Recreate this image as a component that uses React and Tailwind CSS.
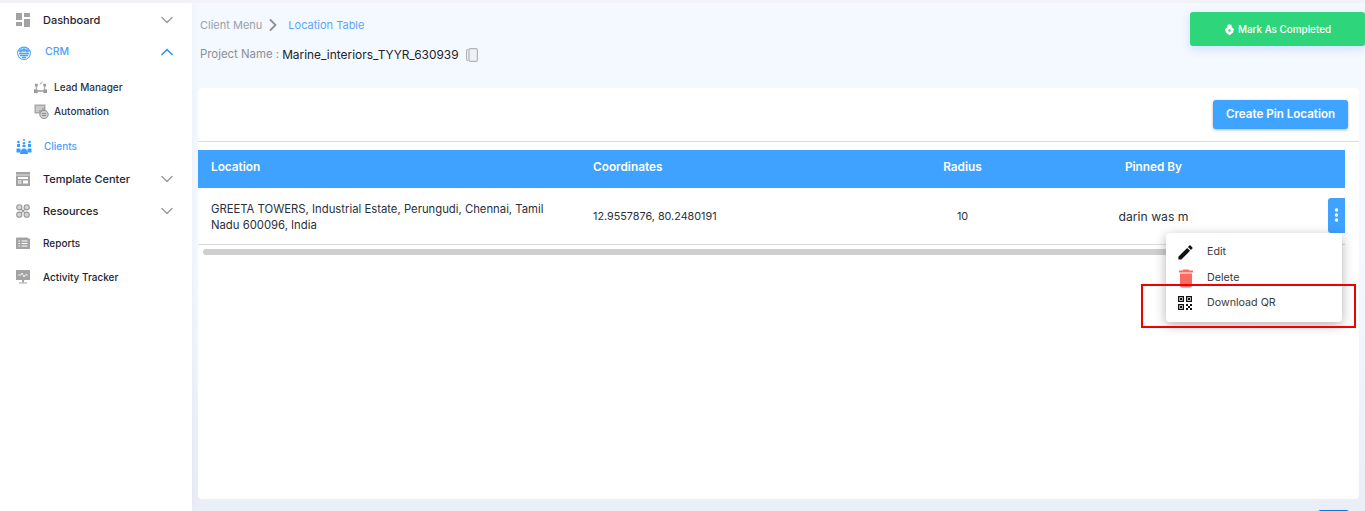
import React from "react";
import { ChevronDown, ChevronUp, ChevronRight, EllipsisVertical } from "lucide-react";

const F = { fontFamily: "Inter, 'Open Sans', sans-serif" };

function DashIcon() {
  return (
    <svg width="14" height="14" viewBox="0 0 14 14" fill="#a3a3a3">
      <rect x="0" y="0" width="6" height="7" /><rect x="8" y="0" width="6" height="4" />
      <rect x="0" y="9" width="6" height="4" /><rect x="8" y="6" width="6" height="8" />
    </svg>
  );
}
function CrmIcon() {
  return (
    <svg width="16" height="16" viewBox="0 0 16 16" fill="none" stroke="#4aa3fb" strokeWidth="1.1">
      <path d="M1.500 9.500a6.500 6.500 0 0 1 13 0" /><path d="M3.500 8a4.500 4.500 0 0 1 9 0" strokeWidth=".7" />
      <circle cx="5" cy="6.800" r="1.100" fill="#4aa3fb" /><circle cx="11" cy="6.800" r="1.100" fill="#4aa3fb" /><circle cx="8" cy="6" r="1.300" fill="#4aa3fb" />
      <path d="M1.500 9.500c.8 3.500 3.400 6 6.500 6s5.700-2.500 6.500-6" /><path d="M3 9.500h10M4 11.500h8M6 13.500h4" strokeWidth="1.300" />
    </svg>
  );
}
function LeadIcon() {
  return (
    <svg width="13" height="13" viewBox="0 0 14 14" fill="#9a9a9a">
      <rect x="1" y="3" width="3" height="3" /><rect x="0" y="9" width="4" height="4" /><rect x="10" y="9" width="4" height="4" /><rect x="10" y="3" width="3" height="3" />
      <path d="M2 6h1v3H2zM11 6h1v3h-1zM4 10h6v1.500H4zM6 3.500l3-3 .6.6-3 3z" />
    </svg>
  );
}
function AutoIcon() {
  return (
    <svg width="15" height="15" viewBox="0 0 15 15" fill="none">
      <rect x="0.500" y="0.500" width="11" height="9" fill="#a8a8a8" /><path d="M2 3h8M2 5h6M2 7h3" stroke="#fff" strokeWidth=".8" />
      <circle cx="10" cy="10.500" r="4.200" fill="#cfcfcf" stroke="#8f8f8f" /><path d="M8 9.500h4M8 11.500h4" stroke="#777" strokeWidth=".8" />
    </svg>
  );
}
function ClientsIcon() {
  return (
    <svg width="16" height="15" viewBox="0 0 16 15" fill="#3b9dfb">
      <circle cx="8" cy="1" r="1" /><circle cx="2.500" cy="3" r="1.300" /><circle cx="8" cy="4.200" r="1.300" /><circle cx="13.500" cy="3" r="1.300" />
      <rect x="1" y="5" width="3" height="3" /><rect x="12" y="5" width="3" height="3" /><rect x="6.500" y="6" width="3" height="2" />
      <rect x="0.500" y="9.500" width="4" height="4" /><rect x="11.500" y="9.500" width="4" height="4" /><path d="M4 15c0-3.500 1.800-5.500 4-5.500s4 2 4 5.500z" />
    </svg>
  );
}
function TemplateIcon() {
  return (
    <svg width="14" height="14" viewBox="0 0 14 14">
      <rect width="14" height="14" fill="#a3a3a3" /><path d="M0 3h14" stroke="#fff" strokeWidth=".7" />
      <rect x="2" y="5" width="10" height="2" fill="#fff" /><rect x="7" y="8.500" width="5" height="3" fill="#fff" /><rect x="2" y="8.500" width="3.500" height="1" fill="#fff" /><rect x="2" y="10.500" width="3.500" height="1" fill="#fff" />
    </svg>
  );
}
function ResIcon() {
  return (
    <svg width="14" height="14" viewBox="0 0 14 14" fill="#d4d4d4" stroke="#9a9a9a" strokeWidth="1.100">
      <circle cx="3.300" cy="3.300" r="2.600" /><circle cx="10.700" cy="3.300" r="2.600" /><circle cx="3.300" cy="10.700" r="2.600" /><circle cx="10.700" cy="10.700" r="2.600" />
      <path d="M5 5l4 4M9 5l-4 4" fill="none" />
    </svg>
  );
}
function ReportIcon() {
  return (
    <svg width="14" height="12" viewBox="0 0 14 12">
      <path d="M0 1.500A1 1 0 0 1 1 .5h10l3 1.500v10H0z" fill="#a3a3a3" /><path d="M2.500 4h1.500M2.500 6.500h1.500M2.500 9h1.500M5.500 4h6M5.500 6.500h6M5.500 9h6" stroke="#fff" />
    </svg>
  );
}
function TrackIcon() {
  return (
    <svg width="14" height="14" viewBox="0 0 14 14">
      <rect y="0" width="14" height="10" rx=".5" fill="#a3a3a3" /><path d="M2 5h3l1-2 2 4 1-2h3" stroke="#fff" strokeWidth=".8" fill="none" />
      <rect x="6" y="10" width="2" height="2.500" fill="#a3a3a3" /><rect x="3" y="12.500" width="8" height="1" fill="#a3a3a3" />
    </svg>
  );
}
function EditIcon() {
  return (
    <svg width="15" height="15" viewBox="2.500 2.500 19 19" fill="#111">
      <path d="M3 17.250V21h3.750L17.810 9.940l-3.750-3.750L3 17.250zM20.710 7.040a1 1 0 0 0 0-1.410l-2.340-2.340a1 1 0 0 0-1.410 0l-1.830 1.830 3.750 3.750 1.830-1.830z" />
    </svg>
  );
}
function DeleteIcon() {
  return (
    <svg width="16" height="19" viewBox="4.500 2.500 15 19" fill="#fa6b62">
      <path d="M6 19c0 1.100.9 2 2 2h8c1.100 0 2-.9 2-2V7H6v12zM19 4h-3.500l-1-1h-5l-1 1H5v2h14V4z" />
    </svg>
  );
}
function QrIcon() {
  return (
    <svg width="14" height="14" viewBox="0 0 14 14" fill="#111">
      <path fillRule="evenodd" d="M0 0h6v6H0zM1.300 1.300v3.400h3.400V1.300z" /><rect x="2" y="2" width="2" height="2" />
      <path fillRule="evenodd" d="M8 0h6v6H8zM9.300 1.300v3.400h3.400V1.300z" /><rect x="10" y="2" width="2" height="2" />
      <path fillRule="evenodd" d="M0 8h6v6H0zM1.300 9.300v3.400h3.400V9.300z" /><rect x="2" y="10" width="2" height="2" />
      <path d="M8 8h2v2H8zM12 8h2v2h-2zM10 10h2v2h-2zM8 12h2v2H8zM12 12h2v2h-2z" />
    </svg>
  );
}
function MarkIcon() {
  return (
    <svg width="11" height="11" viewBox="0 0 11 11" fill="#fff">
      <circle cx="5.500" cy="2.500" r="2.300" /><path d="M1 5l2-1.500h5L10 5 9 8.500 6 11H5L2 8.500z" /><circle cx="5.500" cy="6.500" r="1.200" fill="#2fd57a" />
    </svg>
  );
}
function CopyIcon() {
  return (
    <svg width="12" height="14" viewBox="0 0 12 14" fill="none" stroke="#b4b4b4" strokeWidth="1.200" className="ml-[7px]">
      <path d="M2.500 1.500H1.800A1.200 1.200 0 0 0 .6 2.700v8.600a1.200 1.200 0 0 0 1.200 1.200h.7" />
      <rect x="3" y=".6" width="8.400" height="12.800" rx="1.500" fill="#eef1f5" />
    </svg>
  );
}

function NavRow({ icon, label, active, chevron, labelClass = "text-[11px]", rowClass = "" }) {
  return (
    <div className={`flex h-8 items-center pl-[16px] pr-[15px] ${rowClass}`}>
      <span className="flex w-[27px] shrink-0 items-center">{icon}</span>
      <span className={`flex-1 font-medium ${active ? "text-[#4a9ffb]" : "text-[#1c2431]"} ${labelClass}`}>{label}</span>
      {chevron === "down" && <ChevronDown size={20} strokeWidth={1.700} className="text-[#9b9b9b]" />}
      {chevron === "up" && <ChevronUp size={20} strokeWidth={2} className="text-[#2f95f5]" />}
    </div>
  );
}

function SubRow({ icon, label }) {
  return (
    <div className="flex h-6 items-center pl-[34px]">
      <span className="flex w-[20px] shrink-0 items-center">{icon}</span>
      <span className="text-[10px] font-medium text-[#2b3445]">{label}</span>
    </div>
  );
}

function MenuRow({ icon, label, className = "" }) {
  return (
    <div className={`flex items-center pl-[11px] ${className}`}>
      <span className="flex w-[30px] shrink-0 items-center pl-[1px]">{icon}</span>
      <span className="text-[10.700px] text-[#3a3a3a]">{label}</span>
    </div>
  );
}

export default function App() {
  return (
    <div style={F} className="flex h-[511px] w-[1365px] overflow-hidden border-t-[3px] border-[#f1f3f6] bg-[#f3f8ff]">
      <aside className="relative z-10 w-[192px] shrink-0 bg-white pt-[1px] shadow-[2px_0_8px_rgba(0,0,0,0.03)]">
        <NavRow icon={<DashIcon />} label="Dashboard" chevron="down" />
        <NavRow icon={<CrmIcon />} label="CRM" active chevron="up" labelClass="ml-[2px] text-[10.500px]" />
        <div className="mb-[7px] mt-[7px]">
          <SubRow icon={<LeadIcon />} label="Lead Manager" />
          <SubRow icon={<AutoIcon />} label="Automation" />
        </div>
        <NavRow icon={<ClientsIcon />} label="Clients" active labelClass="ml-[1px] text-[10px]" />
        <NavRow icon={<TemplateIcon />} label="Template Center" chevron="down" rowClass="mt-[1px]" />
        <NavRow icon={<ResIcon />} label="Resources" chevron="down" />
        <NavRow icon={<ReportIcon />} label="Reports" labelClass="text-[10px]" />
        <NavRow icon={<TrackIcon />} label="Activity Tracker" rowClass="mt-[2px]" labelClass="text-[10px]" />
      </aside>

      <main className="relative flex min-w-0 flex-1 flex-col bg-gradient-to-b from-[#f4f8ff] via-[#f4f8ff] to-[#e9eef7] px-[6px]">
        <div className="flex h-[85px] shrink-0 items-start justify-between">
          <div className="pl-[2px] pt-[15px]">
            <div className="flex h-[14px] items-center text-[11px] text-[#9aa0ab]">
              <span>Client Menu</span>
              <ChevronRight size={20} strokeWidth={2.200} className="ml-[1px] mr-[5px] text-[#909090]" />
              <span className="text-[#5ea5fb]">Location Table</span>
            </div>
            <div className="mt-[16px] flex h-[14px] items-center">
              <span className="text-[11.400px] text-[#8a8f98]">Project Name :</span>
              <span className="ml-[3px] text-[11.900px] text-[#20242c]">Marine_interiors_TYYR_630939</span>
              <CopyIcon />
            </div>
          </div>
          <button className="-mr-[6px] mt-[9px] flex h-[34px] w-[175px] items-center justify-center gap-[3px] rounded-[3px] bg-[#2fd57a] text-[9.900px] font-medium text-white shadow-[0_3px_8px_rgba(80,170,255,0.25)]">
            <MarkIcon />
            Mark As Completed
          </button>
        </div>

        <section className="flex h-[411px] shrink-0 flex-col rounded-[4px] bg-white">
          <div className="flex h-[54px] shrink-0 items-start justify-end border-b border-[#dcdcdc] pr-[11px] pt-[12px]">
            <button className="h-[29px] w-[135px] rounded-[3px] bg-[#3fa4ff] text-[11.600px] font-semibold text-white shadow-[0_1px_3px_rgba(0,0,0,0.3)]">
              Create Pin Location
            </button>
          </div>
          <div className="mr-[14px] mt-[8px]">
            <div className="flex h-[38px] items-center bg-[#3fa2ff] pb-[2px] text-[11.800px] font-semibold text-white">
              <div className="w-[382px] pl-[13px]">Location</div>
              <div className="w-[300px] pl-[13px]">Coordinates</div>
              <div className="w-[165px] text-center">Radius</div>
              <div className="w-[217px] text-center">Pinned By</div>
            </div>
            <div className="flex h-[57px] items-center border-b border-[#dcdcdc] pt-[2px] text-[10.800px] text-[#2a2f3a]">
              <div className="w-[382px] pl-[13px] text-[11.300px] leading-[16px]">
                <span className="block w-[340px]">GREETA TOWERS, Industrial Estate, Perungudi, Chennai, Tamil Nadu 600096, India</span>
              </div>
              <div className="w-[300px] pl-[13px]">12.9557876, 80.2480191</div>
              <div className="w-[165px] text-center">10</div>
              <div className="w-[217px] text-center text-[12.200px]">darin was m</div>
              <div className="ml-auto flex h-[35px] w-[17px] -translate-y-[2px] items-center justify-center rounded-l-[3px] bg-[#3fa2ff] text-white">
                <EllipsisVertical size={18} strokeWidth={2.800} />
              </div>
            </div>
            <div className="ml-[5px] mt-[4px] h-[6px] w-[1137px] rounded-[3px] bg-[#cfcfcf]" />
          </div>
        </section>

        <div className="absolute bottom-0 right-[17px] h-[1px] w-[29px] rounded-t-[3px] bg-[#0f74df]" />

        <div className="absolute left-[974px] top-[230px] flex h-[89px] w-[176px] flex-col rounded-[4px] bg-white pt-[6px] shadow-[0_3px_12px_rgba(0,0,0,0.3)]">
          <MenuRow icon={<EditIcon />} label="Edit" className="h-[26px]" />
          <MenuRow icon={<DeleteIcon />} label="Delete" className="h-[26px]" />
          <MenuRow icon={<QrIcon />} label="Download QR" className="h-[24px]" />
        </div>
        <div className="absolute left-[949px] top-[281px] h-[44px] w-[215px] border-2 border-[#f00000]" />
      </main>
    </div>
  );
}
